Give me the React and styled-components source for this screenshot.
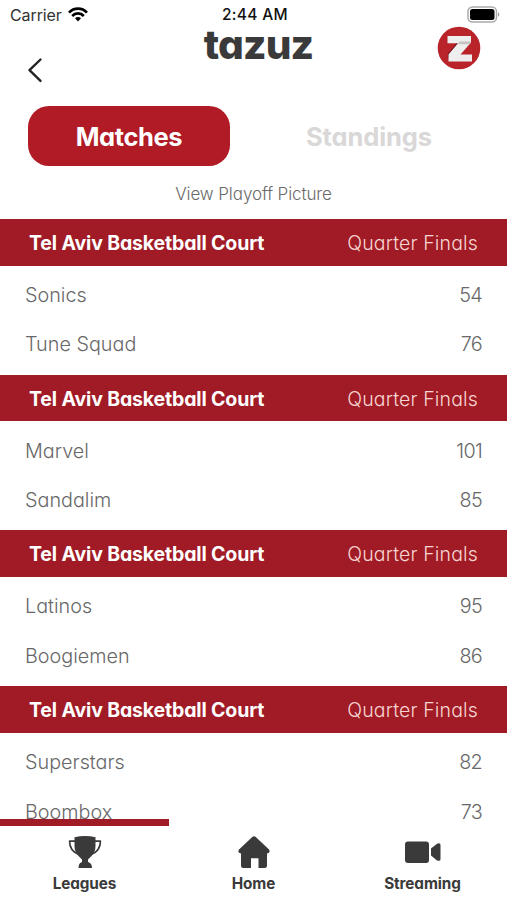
import React from 'react';
import styled, {createGlobalStyle} from 'styled-components';

const court = 'Tel Aviv Basketball Court'
const matches = [
  {home: ['Sonics', 54], away: ['Tune Squad', 76]},
  {home: ['Marvel', 101], away: ['Sandalim', 85]},
  {home: ['Latinos', 95], away: ['Boogiemen', 86]},
  {home: ['Superstars', 82], away: ['Boombox', 73]},
]

const StatusBar = () => (
  <Status>
    <Carrier>
      <span>Carrier</span>
      <svg width="20" height="15" viewBox="0 0 20 15" fill="none" stroke="#000" strokeWidth="2.7">
        <path d="M1 5.6C6 .4 14 .4 19 5.6" />
        <path d="M4.2 9c3.2-3.4 8.4-3.4 11.6 0" />
        <path d="M10 14.4l-3-3.1c1.7-1.6 4.3-1.6 6 0z" fill="#000" stroke="none" />
      </svg>
    </Carrier>
    <Clock>2:44 AM</Clock>
    <Battery>
      <svg width="33" height="17" viewBox="0 0 33 17">
        <rect x="1" y="1" width="28.5" height="15" rx="4.5" fill="#fff" stroke="#aaa" strokeWidth="1.5" />
        <rect x="3" y="3" width="24.5" height="11" rx="2.5" fill="#000" />
        <path d="M31 6.3c1.8.7 1.8 3.7 0 4.4z" fill="#999" />
      </svg>
    </Battery>
  </Status>
)

const Header = () => (
  <HeaderBar>
    <Back aria-label="Back">
      <svg width="16" height="26" viewBox="0 0 16 26" fill="none" stroke="#222" strokeWidth="2.4" strokeLinecap="round" strokeLinejoin="round">
        <path d="M13.5 2.5L2.5 13.2l11 10.7" />
      </svg>
    </Back>
    <Title>tazuz</Title>
    <Logo>
      <svg width="44" height="44" viewBox="0 0 44 44">
        <circle cx="22" cy="22" r="21.3" fill="#b9242a" />
        <path d="M20.5 16L10.8 28v4l3 .5L24 18z" fill="#681319" />
        <path d="M10.5 10h23.500v6.500L23.500 28.500h11.500v7H11.500V28.500L21 17.300H10.500z" fill="#eee" />
        <path d="M22.500 15.500h11.500v1l-1.500 1.700H21z" fill="#c9c2c2" />
      </svg>
    </Logo>
  </HeaderBar>
)

const Match = ({match}) => (
  <div>
    <Band>
      <Court>{court}</Court>
      <Round>Quarter Finals</Round>
    </Band>
    <Teams>
      {[match.home, match.away].map(([name, score]) => (
        <Team key={name}>
          <span>{name}</span>
          <Score>{score}</Score>
        </Team>
      ))}
    </Teams>
  </div>
)

const App = () => {
  return (
    <Screen>
      <GlobalStyle />
      <StatusBar />
      <Header />
      <Tabs>
        <Tab $active>Matches</Tab>
        <Tab>Standings</Tab>
      </Tabs>
      <Playoff>View Playoff Picture</Playoff>
      <List>
        {matches.map((match) => <Match key={match.home[0]} match={match} />)}
      </List>
      <Indicator />
      <Nav>
        <NavItem>
          <svg width="36" height="36" viewBox="0 0 36 36" fill="#3a3a3a">
            <path d="M7.5 3.200Q18 .8 28.500 3.200V12Q28.500 18 24.500 22Q22 24.500 21 25.500V28Q25 29 25 34H11.500Q11.500 29 15 28V25.500Q14 24.500 11.500 22Q7.500 18 7.500 12Z" />
            <path d="M8 7.200H2.600Q2.500 17 12 20.500M28 7.200h5.400Q33.500 17 24 20.500" fill="none" stroke="#3a3a3a" strokeWidth="1.7" strokeLinejoin="round" />
          </svg>
          <NavLabel>Leagues</NavLabel>
        </NavItem>
        <NavItem>
          <svg width="36" height="36" viewBox="0 0 36 36" fill="#3a3a3a">
            <path d="M16.500 2.800q1.500-1.300 3 0L33 15.500q2 3.500-2 4V31.500q0 2.500-2.500 2.500h-6V24.300H15V34H7.500q-2.500 0-2.500-2.500V19.500Q1 19 3 15.500z" />
          </svg>
          <NavLabel>Home</NavLabel>
        </NavItem>
        <NavItem>
          <svg width="36" height="36" viewBox="0 0 36 36" fill="#3a3a3a">
            <rect x="0" y="7.5" width="24" height="21.5" rx="3" />
            <path d="M26 14.5L32 9.8Q35.500 8.500 35.500 11V25Q35.500 27.700 32 26.500L26 21.500z" />
          </svg>
          <NavLabel>Streaming</NavLabel>
        </NavItem>
      </Nav>
    </Screen>
  )
}

export default App;

const GlobalStyle = createGlobalStyle`
  *{
    box-sizing:border-box;
  }
  body{
    margin:0;
    background-color:#fff;
  }
`
const Screen = styled.div`
  width:507px;
  height:900px;
  display:flex;
  flex-direction:column;
  overflow:hidden;
  background-color:#fff;
  color:#3a3a3a;
  font-family:Inter, sans-serif;
  font-feature-settings:"cv11";
`
const Status = styled.div`
  height:28px;
  flex:none;
  display:grid;
  grid-template-columns:1fr auto 1fr;
  align-items:center;
  padding:1px 7px 0 10px;
  font-feature-settings:normal;
`
const Carrier = styled.div`
  display:flex;
  align-items:center;
  gap:6px;
  color:#333;
  font-size:16px;
  letter-spacing:-.1px;
`
const Clock = styled.div`
  padding-top:1px;
  color:#111;
  font-size:15.5px;
  line-height:18px;
  font-weight:500;
  letter-spacing:.3px;
`
const Battery = styled.div`
  display:flex;
  justify-content:flex-end;
`
const HeaderBar = styled.header`
  height:78px;
  flex:none;
  display:grid;
  grid-template-columns:1fr auto 1fr;
  padding:0 26px 0 27px;
`
const Back = styled.div`
  padding-top:29px;
`
const Title = styled.h1`
  margin:0 0 0 9px;
  font-size:40.5px;
  line-height:34px;
  font-weight:800;
  letter-spacing:-.8px;
`
const Logo = styled.div`
  display:flex;
  justify-content:flex-end;
  margin-top:-2px;
`
const Tabs = styled.div`
  display:flex;
  gap:38px;
  padding:0 27px 0 28px;
  flex:none;
`
const Tab = styled.div`
  width:202px;
  height:60px;
  display:flex;
  align-items:center;
  justify-content:center;
  padding-top:1px;
  border-radius:21px;
  background-color:${p => p.$active ? '#b01b26' : 'transparent'};
  color:${p => p.$active ? '#fff' : '#d9d7d7'};
  font-size:25.5px;
  font-weight:700;
  letter-spacing:${p => p.$active ? '-.4px' : '-.1px'};
`
const Playoff = styled.div`
  height:53px;
  flex:none;
  padding-top:1px;
  line-height:54px;
  text-align:center;
  color:#6a6a6a;
  font-size:17px;
  font-weight:300;
  letter-spacing:-.1px;
`
const List = styled.div`
  height:600px;
  flex:none;
`
const Band = styled.div`
  height:46.7px;
  display:flex;
  align-items:center;
  justify-content:space-between;
  padding:1px 29px 0 29px;
  background-color:#a01b25;
  color:#fff;
  font-size:19.5px;
`
const Court = styled.span`
  font-weight:700;
  letter-spacing:-.15px;
`
const Round = styled.span`
  color:#f7d5d2;
  font-weight:300;
  letter-spacing:.15px;
`
const Teams = styled.div`
  height:109px;
  padding-top:4.5px;
`
const Team = styled.div`
  height:49.5px;
  display:flex;
  align-items:center;
  justify-content:space-between;
  padding:0 25px;
  color:#686868;
  font-size:19.8px;
  line-height:24px;
  font-weight:300;
`
const Score = styled.span`
  letter-spacing:-.7px;
`
const Indicator = styled.div`
  position:relative;
  width:169px;
  height:7px;
  flex:none;
  background-color:#a01b25;
`
const Nav = styled.nav`
  flex:1;
  display:grid;
  grid-template-columns:repeat(3, 1fr);
`
const NavItem = styled.div`
  display:flex;
  flex-direction:column;
  align-items:center;
  padding-top:8px;
`
const NavLabel = styled.span`
  margin-top:4px;
  font-size:15.3px;
  line-height:20px;
  font-weight:700;
  letter-spacing:-.1px;
`
